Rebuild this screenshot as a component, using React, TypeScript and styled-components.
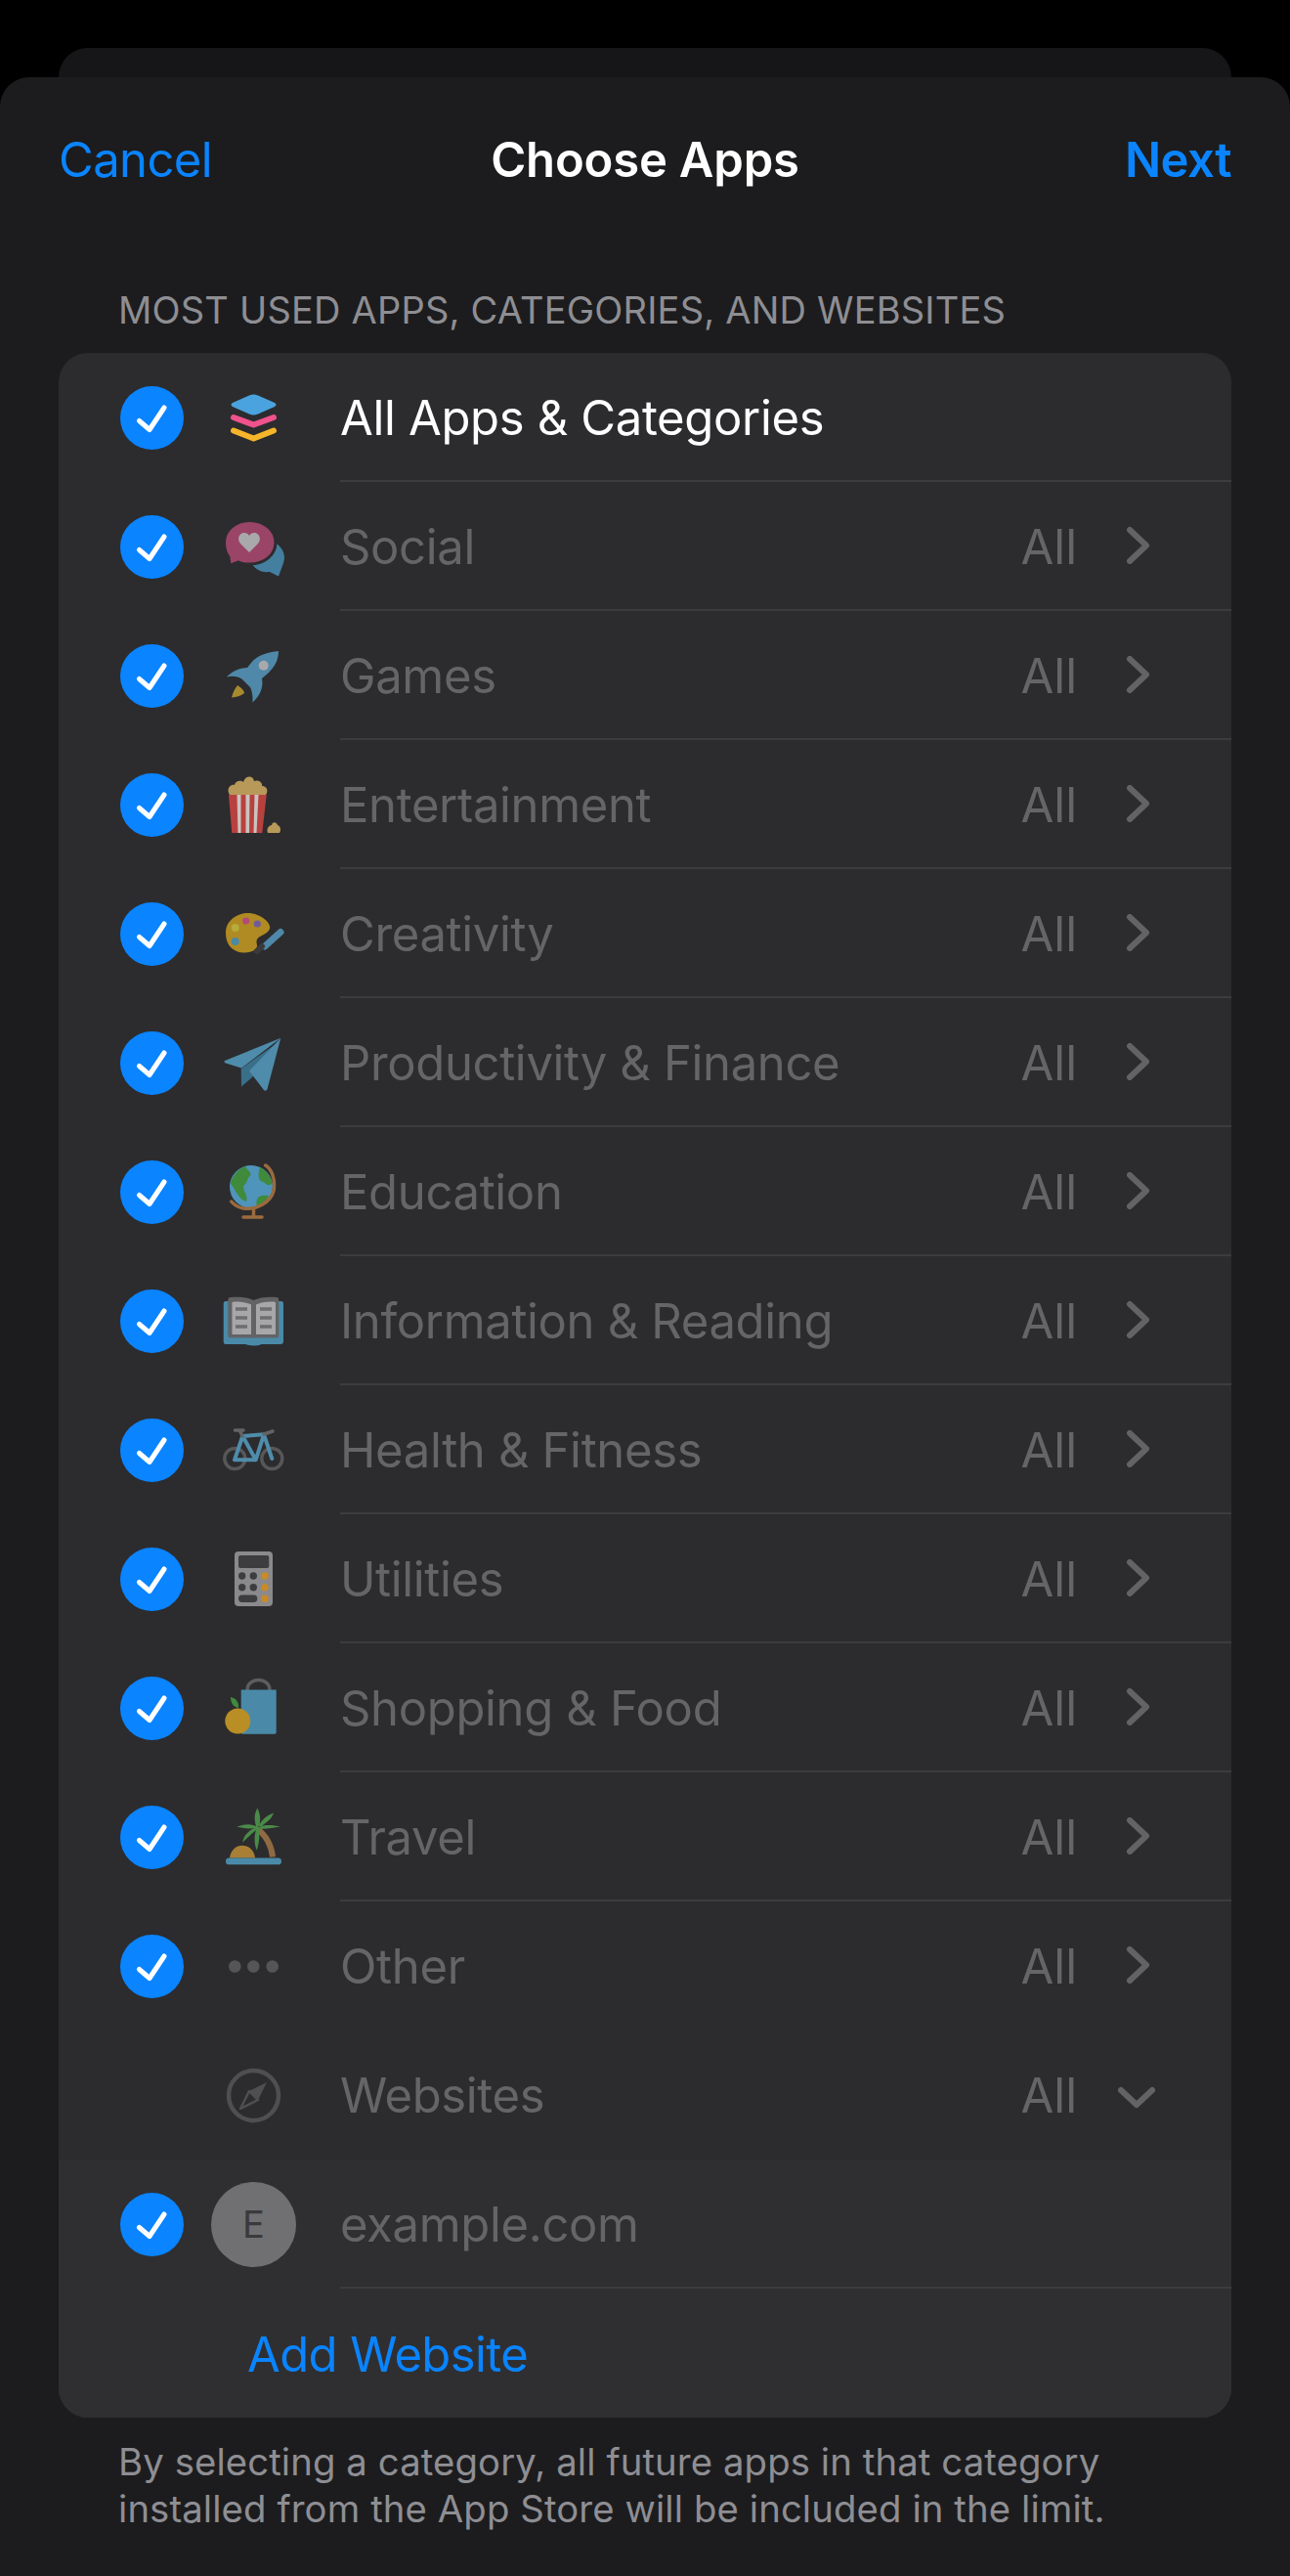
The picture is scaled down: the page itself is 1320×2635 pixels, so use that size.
import React from 'react';
import styled, { createGlobalStyle } from 'styled-components';

const GlobalStyle = createGlobalStyle`
  html, body {
    margin: 0;
    padding: 0;
    background: #000;
  }
  body {
    font-family: Inter, "Noto Sans", "Liberation Sans", sans-serif;
    -webkit-font-smoothing: antialiased;
  }
`;

const Page = styled.div`
  width: 1320px;
  height: 2635px;
  padding-top: 49px;
  box-sizing: border-box;
  background: #000;
  overflow: hidden;
`;

const BackSheet = styled.div`
  height: 30px;
  margin: 0 60px;
  background: #161618;
  border-radius: 30px 30px 0 0;
`;

const Sheet = styled.div`
  height: 2556px;
  background: #1c1c1e;
  border-radius: 30px 30px 0 0;
  padding: 0 60px;
  box-sizing: border-box;
`;

const NavBar = styled.div`
  height: 168px;
  display: grid;
  grid-template-columns: 1fr auto 1fr;
  align-items: center;
`;

const NavButton = styled.span<{ $bold?: boolean }>`
  font-size: 49px;
  letter-spacing: ${(p) => (p.$bold ? '-0.5px' : '-0.6px')};
  font-weight: ${(p) => (p.$bold ? 600 : 400)};
  text-align: ${(p) => (p.$bold ? 'right' : 'left')};
  color: #0a84ff;
`;

const NavTitle = styled.span`
  font-size: 49px;
  letter-spacing: -0.2px;
  font-weight: 600;
  color: #fff;
`;

const SectionTitle = styled.div`
  height: 114px;
  padding: 40px 0 0 61px;
  box-sizing: border-box;
  font-size: 38px;
  line-height: 60px;
  letter-spacing: 0.2px;
  color: #8e8e93;
`;

const Card = styled.div`
  background: #2c2c2e;
  border-radius: 30px;
  overflow: hidden;
`;

const Row = styled.div<{ $light?: boolean }>`
  height: 132px;
  display: flex;
  align-items: center;
  padding-left: 63px;
  background: ${(p) => (p.$light ? '#2f2f31' : 'transparent')};
`;

const CheckSlot = styled.div`
  flex: 0 0 65px;
  height: 65px;
  margin-right: 28px;
`;

const CheckSvg = styled.svg`
  display: block;
`;

const IconSlot = styled.div`
  flex: 0 0 87px;
  height: 87px;
  margin-right: 45px;
`;

const IconSvg = styled.svg`
  display: block;
`;

const Avatar = styled.div`
  width: 87px;
  height: 87px;
  border-radius: 50%;
  background: #707072;
  color: #3a3a3c;
  font-size: 38px;
  display: flex;
  align-items: center;
  justify-content: center;
`;

const RowBody = styled.div<{ $line: boolean }>`
  flex: 1;
  height: 132px;
  box-sizing: border-box;
  display: flex;
  align-items: center;
  padding: 3px 78px 0 0;
  border-bottom: 2px solid ${(p) => (p.$line ? '#3c3c3e' : 'transparent')};
`;

const Label = styled.span<{ $active?: boolean }>`
  flex: 1;
  font-size: 49px;
  letter-spacing: -0.35px;
  color: ${(p) => (p.$active ? '#fff' : '#656567')};
`;

const Value = styled.span`
  font-size: 49px;
  color: #656567;
  margin-right: 42px;
`;

const Disclosure = styled.svg`
  display: block;
  margin-top: -3px;
`;

const AddRow = styled.div`
  height: 132px;
  display: flex;
  align-items: center;
  padding: 3px 0 0 193px;
  box-sizing: border-box;
  font-size: 49px;
  letter-spacing: -0.6px;
  color: #0a84ff;
  background: #2f2f31;
`;

const Footnote = styled.div`
  padding: 21px 0 0 61px;
  font-size: 38.3px;
  line-height: 48px;
  letter-spacing: 0.1px;
  color: #8e8e93;
`;

const Check = () => (
  <CheckSvg width="65" height="65" viewBox="0 0 65 65">
    <circle cx="32.5" cy="32.5" r="32.5" fill="#0a84ff" />
    <path d="M19.5 35.5 L30 44.5 L45 22" fill="none" stroke="#fff" strokeWidth="5" strokeLinecap="round" strokeLinejoin="round" />
  </CheckSvg>
);

const Chevron = ({ down }: { down?: boolean }) =>
  down ? (
    <Disclosure width="38" height="38" viewBox="0 0 38 38">
      <path d="M3 15 L19 30 L35 15" fill="none" stroke="#636366" strokeWidth="6" strokeLinecap="round" strokeLinejoin="round" />
    </Disclosure>
  ) : (
    <Disclosure width="38" height="38" viewBox="0 0 38 38">
      <path d="M12 3 L29 19 L12 35" fill="none" stroke="#636366" strokeWidth="6" strokeLinecap="round" strokeLinejoin="round" />
    </Disclosure>
  );

const Glyph = ({ children }: { children: React.ReactNode }) => (
  <IconSvg width="87" height="87" viewBox="0 0 87 87">
    {children}
  </IconSvg>
);

const Layers = () => (
  <Glyph>
    <path d="M39 20.5 Q43.5 18.5 48 20.5 L65 28 Q68 30 65 32 L48 39.5 Q43.5 41.5 39 39.5 L22 32 Q19 30 22 28Z" fill="#4aa3df" />
    <path d="M23 43 L43.5 50.5 L64 43" fill="none" stroke="#f0528b" strokeWidth="6" strokeLinecap="round" strokeLinejoin="round" />
    <path d="M23 56.5 L43.5 64.5 L64 56.5" fill="none" stroke="#f6b52a" strokeWidth="6" strokeLinecap="round" strokeLinejoin="round" />
  </Glyph>
);

const Social = () => (
  <Glyph>
    <path d="M38 52 C40 46 50 35 58 37 C70 38 78 50 74 60 L69 73.5 L60 69 C50 70 42 66 38 52Z" fill="#447f9f" />
    <path d="M13.5 39 C13.5 26 25 16.5 39.5 16.5 C54 16.5 66 26 66 39 C66 52 54 61 39.5 61 C35 61 31 60.5 28 59 L19 62.5 L18 54 C15 50 13.5 45 13.5 39Z" fill="#9a4468" stroke="#2c2c2e" strokeWidth="3" />
    <path d="M39 49 L30 40 C26 35 29 29 34 29 C36 29 38 30 39 32 C40 30 42 29 44 29 C49 29 52 35 48 40Z" fill="#a9a9ab" />
  </Glyph>
);

const Rocket = () => (
  <Glyph>
    <path d="M69 18 C58 19 47 22 41 30 L37 35 C29 35 21 39 16 44.5 C22 43 28 44 32 47 L40 55 C42 59 43 65 42.3 70.5 C49 65 54 56 52 46 L59 40 C66 33 69 26 69 18Z" fill="#4f88a8" />
    <circle cx="53.7" cy="32.8" r="5" fill="#a9a9ab" />
    <path d="M27 53 C31 56 34 58 34 61 C30 64 26 65 21 65.5 C22 61 24 57 27 53Z" fill="#a88a2e" />
  </Glyph>
);

const Popcorn = () => (
  <Glyph>
    <path d="M19 33 C15 27 20 22 24 23 C25 18 31 18 33 20 C35 13 43 13 44 19 C49 17 53 21 52 24 C57 24 59 29 56 33Z" fill="#b8995a" />
    <path d="M18 33 H56.7 L52.3 72 H21.3Z" fill="#b8413f" />
    <path d="M26.5 33 H30.5 L30.5 72 H27.5Z M35.5 33 H39.5 L39 72 H35.5Z M44.5 33 H48.5 L46.5 72 H43.5Z" fill="#c9c4c0" />
    <path d="M58 72 C56 67 60 64 62 64 C63 60 67 61 68 64 C71 65 72 69 70 72Z" fill="#b8995a" />
  </Glyph>
);

const Palette = () => (
  <Glyph>
    <path d="M15 42 C15 30 26 22 38 22 C50 22 62 32 60 38 C58 44 50 44 47 49 C45 53 50 56 44 60 C36 65 15 64 15 42Z" fill="#b08a22" />
    <circle cx="24.7" cy="37" r="4" fill="#b5ad3b" />
    <circle cx="35.7" cy="30" r="3.6" fill="#b24b78" />
    <circle cx="47.3" cy="33" r="3.6" fill="#6f5b9c" />
    <circle cx="24.7" cy="51" r="4" fill="#4a89a8" />
    <path d="M55 56 L71 41.5" stroke="#4f88a8" strokeWidth="7" strokeLinecap="round" />
    <path d="M52 56 L47 61" stroke="#3a3a3c" strokeWidth="6" strokeLinecap="round" />
  </Glyph>
);

const Plane = () => (
  <Glyph>
    <path d="M30.7 49 L31 67.5 L42 58 L66 24Z" fill="#3a6f8a" />
    <path d="M71.3 17.8 L14 41 C13 42 13.5 43 15 43.5 L31 48.5 Z" fill="#4f8cab" />
    <path d="M71.3 17.8 L39 51.5 L54 71 C55 72 57 72 57.5 70 Z" fill="#4f8cab" />
  </Glyph>
);

const Globe = () => (
  <Glyph>
    <circle cx="41" cy="38" r="22" fill="#4f94bb" />
    <path d="M20 34 C22 26 28 20 35 17 C37 22 42 22 40 27 C36 29 38 34 33 37 C33 44 38 46 36 53 C30 52 26 44 20 34Z" fill="#3f8a3b" />
    <path d="M50 18 C56 21 61 27 62.5 34 C60 38 56 36 54 33 C49 33 47 27 50 18Z M48 49 C52 46 56 47 59 47 C56 53 52 57 47 59 C46 56 46 52 48 49Z" fill="#3f8a3b" />
    <path d="M55.7 16 C62 20 66 30 64 42 C61 54 46 62 33 60 C28 59 24 57 20.7 53" fill="none" stroke="#9a6b3e" strokeWidth="3.5" strokeLinecap="round" />
    <path d="M43.5 60 V68 M33 69 H52" fill="none" stroke="#9a6b3e" strokeWidth="3.5" strokeLinecap="round" />
  </Glyph>
);

const Book = () => (
  <Glyph>
    <path d="M15 23 H72 Q74 23 74 26 V64 Q74 67 71 67 H52 Q43.5 70 35 67 H15 Q12.7 67 12.7 64 V26 Q12.7 23 15 23Z" fill="#4a8aa8" />
    <path d="M20 19 C28 18 38 19 43.5 22 C49 19 59 18 67 19 Q69.3 19 69.3 22 V58 Q69.3 60.5 67 60.5 H20 Q17.3 60.5 17.3 58 V22 Q17.3 19 20 19Z" fill="#636366" />
    <path d="M21.5 24 C28 23 36 24 41 26.5 V57 H21.5Z M46 26.5 C51 24 60 23 66 24 V57 H46Z" fill="#a7a7a9" />
    <path d="M25 31 H37 M25 40 H37 M25 49 H37 M50 31 H62 M50 40 H62 M50 49 H62" stroke="#6e6e70" strokeWidth="3.5" />
  </Glyph>
);

const Bike = () => (
  <Glyph>
    <circle cx="24.3" cy="52" r="10.5" fill="none" stroke="#575759" strokeWidth="3.5" />
    <circle cx="62.3" cy="52" r="10.5" fill="none" stroke="#575759" strokeWidth="3.5" />
    <path d="M24 53.3 H45.7 L54 27.3 L32.3 29Z M45.7 53.3 L32.3 29 M54 27.3 L62.3 52" fill="none" stroke="#4f8cab" strokeWidth="4" strokeLinejoin="round" strokeLinecap="round" />
    <path d="M24.5 23 H33 M29.7 24 L32 29 M54 27 L63 24" fill="none" stroke="#636366" strokeWidth="3.5" strokeLinecap="round" />
  </Glyph>
);

const Calculator = () => (
  <Glyph>
    <rect x="24" y="15" width="39" height="56" rx="4" fill="#8a8a8c" />
    <rect x="28" y="19" width="31.3" height="13" rx="2" fill="#3d3d3f" />
    <circle cx="31.7" cy="40" r="3.7" fill="#3d3d3f" />
    <circle cx="43.3" cy="40" r="3.7" fill="#3d3d3f" />
    <circle cx="55" cy="40" r="3.7" fill="#c98a28" />
    <circle cx="31.7" cy="51.8" r="3.7" fill="#3d3d3f" />
    <circle cx="43.3" cy="51.8" r="3.7" fill="#3d3d3f" />
    <circle cx="55" cy="51.8" r="3.7" fill="#c98a28" />
    <rect x="28" y="59.5" width="19.3" height="7.4" rx="3.7" fill="#3d3d3f" />
    <circle cx="55" cy="63.2" r="3.7" fill="#c98a28" />
  </Glyph>
);

const Bag = () => (
  <Glyph>
    <path d="M37 25 C37 11 60 11 60 25" fill="none" stroke="#5d5d5f" strokeWidth="3.5" />
    <path d="M30.7 24.5 H66.7 V68 Q66.7 69.8 65 69.8 H32 Q30.7 69.8 30.7 68Z" fill="#4a8aa8" />
    <path d="M28 43 C22 42 20 37 20 32 C25 33 29 37 28 43Z" fill="#3f8a3b" />
    <circle cx="27.3" cy="56.5" r="13" fill="#b98f25" />
  </Glyph>
);

const Palm = () => (
  <Glyph>
    <path d="M47.3 35 C56 41 62 52 63 63.5" fill="none" stroke="#8f6a42" strokeWidth="6" />
    <path d="M19 64.5 C20 56 26 51.8 32 51.8 C38 51.8 44 56 45 64.5Z" fill="#a97f35" />
    <rect x="15" y="64.5" width="57" height="6.8" rx="3.4" fill="#4a8aa8" />
    <path d="M47.3 13.5 C51 20 51 28 48 34 C56 29 62 25 64 18.5 C57 21 51 26 48 33 C55 30 65 31 70.7 32.5 C63 34 55 35 49 35 C50 42 49 50 46.7 56.8 C44 50 44 42 46 36 C41 40 37 44 32.3 48.5 C33 42 38 37 44 34 C38 35 32 34 26.3 32.5 C33 30 39 29 46 32 C44 26 44 20 47.3 13.5Z" fill="#4a8a48" />
  </Glyph>
);

const Dots = () => (
  <Glyph>
    <circle cx="24.3" cy="43.5" r="6.3" fill="#555557" />
    <circle cx="43.3" cy="43.5" r="6.3" fill="#555557" />
    <circle cx="62.7" cy="43.5" r="6.3" fill="#555557" />
  </Glyph>
);

const Compass = () => (
  <Glyph>
    <circle cx="43.5" cy="43.5" r="25.5" fill="none" stroke="#4f4f51" strokeWidth="4.5" />
    <path d="M57 30 L48 48 L39 39Z" fill="#4f4f51" />
    <path d="M30 57 L39 39 L48 48Z" fill="none" stroke="#4f4f51" strokeWidth="2.5" strokeLinejoin="round" />
  </Glyph>
);

const categories: { name: string; icon: React.ComponentType }[] = [
  { name: 'Social', icon: Social },
  { name: 'Games', icon: Rocket },
  { name: 'Entertainment', icon: Popcorn },
  { name: 'Creativity', icon: Palette },
  { name: 'Productivity & Finance', icon: Plane },
  { name: 'Education', icon: Globe },
  { name: 'Information & Reading', icon: Book },
  { name: 'Health & Fitness', icon: Bike },
  { name: 'Utilities', icon: Calculator },
  { name: 'Shopping & Food', icon: Bag },
  { name: 'Travel', icon: Palm },
  { name: 'Other', icon: Dots },
];

const App: React.FC = () => (
  <Page>
    <GlobalStyle />
    <BackSheet />
    <Sheet>
      <NavBar>
        <NavButton>Cancel</NavButton>
        <NavTitle>Choose Apps</NavTitle>
        <NavButton $bold>Next</NavButton>
      </NavBar>
      <SectionTitle>MOST USED APPS, CATEGORIES, AND WEBSITES</SectionTitle>
      <Card>
        <Row>
          <CheckSlot><Check /></CheckSlot>
          <IconSlot><Layers /></IconSlot>
          <RowBody $line>
            <Label $active>All Apps &amp; Categories</Label>
          </RowBody>
        </Row>
        {categories.map(({ name, icon: Icon }) => (
          <Row key={name}>
            <CheckSlot><Check /></CheckSlot>
            <IconSlot><Icon /></IconSlot>
            <RowBody $line={name !== 'Other'}>
              <Label>{name}</Label>
              <Value>All</Value>
              <Chevron />
            </RowBody>
          </Row>
        ))}
        <Row>
          <CheckSlot />
          <IconSlot><Compass /></IconSlot>
          <RowBody $line={false}>
            <Label>Websites</Label>
            <Value>All</Value>
            <Chevron down />
          </RowBody>
        </Row>
        <Row $light>
          <CheckSlot><Check /></CheckSlot>
          <IconSlot><Avatar>E</Avatar></IconSlot>
          <RowBody $line>
            <Label>example.com</Label>
          </RowBody>
        </Row>
        <AddRow>Add Website</AddRow>
      </Card>
      <Footnote>
        By selecting a category, all future apps in that category
        <br />
        installed from the App Store will be included in the limit.
      </Footnote>
    </Sheet>
  </Page>
);

export default App;
